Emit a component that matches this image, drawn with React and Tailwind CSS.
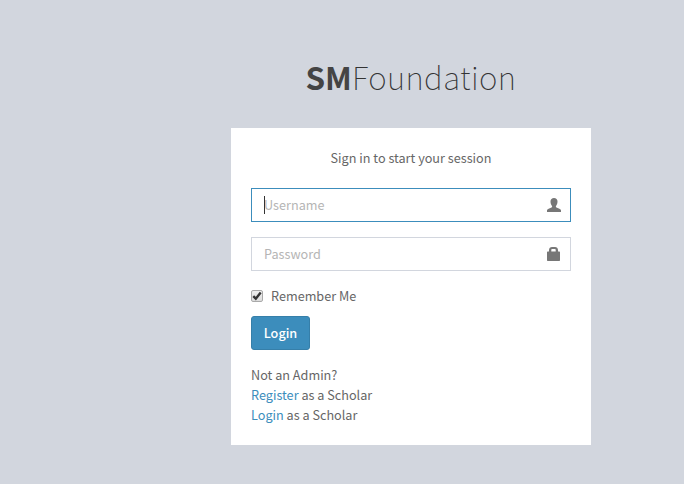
import React from "react";

function UserIcon() {
  return (
    <svg width="14" height="14" viewBox="0 0 14 14" fill="#777">
      <path d="M7 0C4.900 0 3.500 1.300 3.500 3.300c0 1.900.6 3.700 1.500 4.700.3.500.2 1.100-.4 1.400L1.600 10.700C.5 11.200 0 11.800 0 12.600V14h14v-1.400c0-.8-.5-1.400-1.600-1.900L9.400 9.400c-.6-.3-.7-.9-.4-1.400.9-1 1.500-2.800 1.500-4.700C10.500 1.300 9.100 0 7 0z" />
    </svg>
  );
}

function LockIcon() {
  return (
    <svg width="14" height="14" viewBox="0 0 14 14" fill="#777">
      <path
        fillRule="evenodd"
        d="M2 4.500V3C2 1.100 3.300 0 5 0h3C9.700 0 11 1.100 11 3v1.500h1c.7 0 1 .3 1 1V13c0 .7-.3 1-1 1H1c-.7 0-1-.3-1-1V5.500c0-.7.3-1 1-1zm2.300 0h4.400V3c0-.7-.4-1-1-1H5.300c-.6 0-1 .3-1 1z"
      />
    </svg>
  );
}

function Field({ type, placeholder, icon, active }) {
  return (
    <div className={`relative mb-[15px] flex h-[34px] items-center border bg-white pl-3 pr-[9px] ${active ? "border-[#3c8dbc]" : "border-[#d2d6de]"}`}>
      {active && <span className="absolute left-3 top-[7px] h-[18px] w-px bg-[#333]" />}
      <input
        type={type}
        placeholder={placeholder}
        className="h-full min-w-0 flex-1 bg-transparent p-0 pb-0.5 text-[#555] outline-none placeholder:text-[#b5b5b5]"
      />
      {icon}
    </div>
  );
}

export default function App() {
  return (
    <div className="h-[484px] w-[684px] overflow-hidden bg-[#d2d6de] pl-[231px] pt-[52px] font-['Noto_Sans_CJK_SC',sans-serif] text-[12.66px] leading-5 text-[#666]">
      <main className="w-[360px]">
        <h1 className="mb-[26px] h-[50px] whitespace-nowrap text-center text-[31.4px] font-thin leading-[50px] text-[#444]">
          <b className="font-bold">SM</b><span className="tracking-[0.4px] text-[#333]">Foundation</span>
        </h1>
        <section className="h-[317px] bg-white px-5 pt-5">
          <p className="mb-5 text-center">Sign in to start your session</p>
          <form onSubmit={(e) => e.preventDefault()}>
            <Field type="text" placeholder="Username" icon={<UserIcon />} active />
            <Field type="password" placeholder="Password" icon={<LockIcon />} />
            <label className="flex h-5 items-center">
              <input type="checkbox" defaultChecked className="peer sr-only" />
              <span className="mr-2 flex size-3 items-center justify-center rounded-[2px] border border-[#a9a9a9] bg-linear-to-b from-[#eee] to-[#ddd]">
                <svg width="10" height="10" viewBox="0 0 10 10" fill="none" stroke="#333" strokeWidth="2.4">
                  <path d="M1.300 5.200 3.800 7.700 8.700 1.600" />
                </svg>
              </span>
              Remember Me
            </label>
            <button className="mb-[15px] mt-2.5 flex h-[34px] w-[59px] items-center justify-center rounded-[3px] border border-[#367fa9] bg-[#3c8dbc] font-medium text-white">
              Login
            </button>
          </form>
          <p>Not an Admin?</p>
          <p><a href="#register" className="text-[#3c8dbc]">Register</a> as a Scholar</p>
          <p><a href="#login" className="text-[#3c8dbc]">Login</a> as a Scholar</p>
        </section>
      </main>
    </div>
  );
}
